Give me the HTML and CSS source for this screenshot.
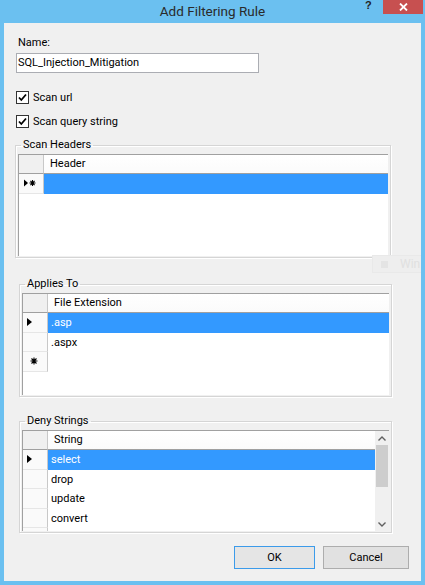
FILE: index.html
```html
<!DOCTYPE html>
<html>
<head>
<meta charset="utf-8">
<link rel="stylesheet" href="styles.css">
</head>
<body>
<div class="window">
  <div class="titlebar">
    <div class="tb-spacer"></div>
    <div class="title">Add Filtering Rule</div>
    <div class="help">?</div>
    <div class="close"><svg width="9" height="8" viewBox="0 0 9 8"><path d="M1 0.5 L8 7.5 M8 0.5 L1 7.5" stroke="#fff" stroke-width="1.8"/></svg></div>
  </div>
  <div class="client">
    <div class="name-label">Name:</div>
    <div class="textbox">SQL_Injection_Mitigation</div>
    <div class="check c1"><span class="box"><svg width="11" height="11" viewBox="0 0 11 11"><path d="M2 5.5 L4.3 8 L9 2.5" fill="none" stroke="#000" stroke-width="1.8"/></svg></span><span class="check-text">Scan url</span></div>
    <div class="check c2"><span class="box"><svg width="11" height="11" viewBox="0 0 11 11"><path d="M2 5.5 L4.3 8 L9 2.5" fill="none" stroke="#000" stroke-width="1.8"/></svg></span><span class="check-text">Scan query string</span></div>

    <fieldset class="group g-headers">
      <legend>Scan Headers</legend>
      <div class="grid">
        <div class="gtable">
          <div class="row head"><div class="rh"></div><div class="cell">Header</div></div>
          <div class="row sel"><div class="rh rh-both">
            <svg width="12" height="8" viewBox="0 0 12 8"><path d="M0 0.5 L4 4 L0 7.5 Z" fill="#000"/><g stroke="#000" stroke-width="1.1"><path d="M8.5 1 V7 M5.5 4 H11.5 M6.4 1.9 L10.6 6.1 M10.6 1.9 L6.4 6.1"/></g></svg>
          </div><div class="cell"></div></div>
        </div>
      </div>
    </fieldset>

    <fieldset class="group g-applies">
      <legend>Applies To</legend>
      <div class="grid">
        <div class="gtable">
          <div class="row head"><div class="rh"></div><div class="cell">File Extension</div></div>
          <div class="row sel"><div class="rh"><svg class="arrow" width="5" height="8" viewBox="0 0 5 8"><path d="M0 0 L5 4 L0 8 Z" fill="#000"/></svg></div><div class="cell">.asp</div></div>
          <div class="row"><div class="rh"></div><div class="cell">.aspx</div></div>
          <div class="row"><div class="rh"><svg class="star" width="8" height="8" viewBox="0 0 8 8"><g stroke="#000" stroke-width="1.1"><path d="M4 0.5 V7.5 M0.5 4 H7.5 M1.5 1.5 L6.5 6.5 M6.5 1.5 L1.5 6.5"/></g></svg></div><div class="cell"></div></div>
        </div>
      </div>
    </fieldset>

    <fieldset class="group g-deny">
      <legend>Deny Strings</legend>
      <div class="grid grid-scroll">
        <div class="gtable">
          <div class="row head"><div class="rh"></div><div class="cell">String</div></div>
          <div class="row sel"><div class="rh"><svg class="arrow" width="5" height="8" viewBox="0 0 5 8"><path d="M0 0 L5 4 L0 8 Z" fill="#000"/></svg></div><div class="cell">select</div></div>
          <div class="row"><div class="rh"></div><div class="cell">drop</div></div>
          <div class="row"><div class="rh"></div><div class="cell">update</div></div>
          <div class="row"><div class="rh"></div><div class="cell">convert</div></div>
          <div class="row"><div class="rh"></div><div class="cell"></div></div>
        </div>
        <div class="scrollbar">
          <div class="sb-btn"><svg width="8" height="5" viewBox="0 0 8 5"><path d="M0.5 4.5 L4 1 L7.5 4.5" fill="none" stroke="#606060" stroke-width="1.4"/></svg></div>
          <div class="sb-track"><div class="sb-thumb"></div></div>
          <div class="sb-btn"><svg width="8" height="5" viewBox="0 0 8 5"><path d="M0.5 0.5 L4 4 L7.5 0.5" fill="none" stroke="#606060" stroke-width="1.4"/></svg></div>
        </div>
      </div>
    </fieldset>

    <div class="buttons">
      <div class="btn btn-default">OK</div>
      <div class="btn">Cancel</div>
    </div>

    <div class="watermark"><span class="wm-icon"></span><span class="wm-text">Win</span></div>
  </div>
</div>
</body>
</html>
```

FILE: styles.css
```css
* { box-sizing: border-box; }

body {
  margin: 0;
  font-family: Roboto, "Open Sans", sans-serif;
  font-size: 11px;
  color: #000;
}

.window {
  width: 425px;
  height: 585px;
  background: #6bc0f0;
  display: flex;
  flex-direction: column;
  overflow: hidden;
}

.titlebar {
  height: 23px;
  flex: none;
  display: flex;
  align-items: flex-start;
}

.tb-spacer { width: 60px; flex: none; }

.title {
  flex: 1;
  text-align: center;
  font-size: 13.5px;
  line-height: 22px;
  color: #2a2a2a;
}

.help {
  width: 18px;
  flex: none;
  font-family: "Liberation Sans", sans-serif;
  font-weight: bold;
  font-size: 11px;
  line-height: 11px;
  color: #222;
}

.close {
  width: 40px;
  height: 14px;
  flex: none;
  margin-right: 2px;
  background: #c75050;
  display: flex;
  align-items: center;
  justify-content: center;
}

.client {
  position: relative;
  flex: 1;
  margin: 0 4px 4px 4px;
  background: #f0f0f0;
  overflow: hidden;
  display: flex;
  flex-direction: column;
  align-items: flex-start;
}

.name-label {
  margin: 12px 0 0 14px;
  line-height: 16px;
}

.textbox {
  margin: 2px 0 0 12px;
  width: 243px;
  height: 20px;
  background: #fff;
  border: 1px solid #abadb3;
  padding: 0 1px;
  line-height: 18px;
}

.check {
  display: flex;
  align-items: center;
  height: 13px;
  margin-left: 12px;
}
.c1 { margin-top: 18px; }
.c2 { margin-top: 11px; }

.box {
  width: 13px;
  height: 13px;
  border: 1px solid #333;
  background: #fff;
  display: flex;
  align-items: center;
  justify-content: center;
}

.check-text {
  margin-left: 4px;
  line-height: 13px;
}

.group {
  margin: 0;
  border: 1px solid #d5d5d5;
  box-shadow: inset 1px 1px 0 #fff, 1px 1px 0 #fff;
  padding: 1px 2px 1px 2px;
  min-width: 0;
}

.group legend {
  margin-left: 3px;
  padding: 0 2px;
  line-height: 16px;
}

.g-headers { margin: 9px 0 0 11px; width: 376px; }
.g-applies { margin: 18px 0 0 15px; width: 373px; }
.g-deny    { margin: 16px 0 0 15px; width: 373px; }

.grid {
  background: #fff;
  border-top: 1px solid #a0a0a0;
  border-left: 1px solid #a0a0a0;
  height: 102px;
  display: flex;
  overflow: hidden;
}
.g-deny .grid { height: 101px; }

.gtable { flex: 1; min-width: 0; }

.row {
  display: flex;
  height: 19.5px;
}
.row.head { height: 19px; }

.rh {
  width: 25px;
  flex: none;
  background: #fafafa;
  border-right: 1px solid #c8c8c8;
  border-bottom: 1px solid #e6e6e6;
  display: flex;
  align-items: center;
}
.head .rh {
  background: #f0f0f0;
  border-bottom: 1px solid #a0a0a0;
}

.cell {
  flex: 1;
  padding-left: 3px;
  line-height: 19px;
  white-space: nowrap;
}
.head .cell {
  background: linear-gradient(#ffffff, #fbfbfb);
  border-bottom: 1px solid #a0a0a0;
  padding-left: 6px;
  line-height: 18px;
}

.sel .cell {
  background: #3399ff;
  color: #fff;
}

.arrow { margin-left: 4px; }
.star { margin-left: 7px; }
.rh-both svg { margin-left: 5px; }

.scrollbar {
  width: 14px;
  flex: none;
  background: #f0f0f0;
  display: flex;
  flex-direction: column;
}
.sb-btn {
  height: 14px;
  display: flex;
  align-items: center;
  justify-content: center;
  flex: none;
}
.sb-track { flex: 1; padding: 0 1px; }
.sb-thumb {
  height: 42px;
  background: #cdcdcd;
}

.buttons {
  align-self: stretch;
  display: flex;
  justify-content: flex-end;
  gap: 8px;
  margin: 13px 12px 0 0;
}

.btn {
  width: 86px;
  height: 23px;
  background: #e1e1e1;
  border: 1px solid #adadad;
  text-align: center;
  line-height: 21px;
}
.btn-default {
  width: 81px;
  border-color: #3c9bea;
  background: #e5e5e5;
}

.watermark {
  position: absolute;
  left: 368px;
  top: 232px;
  width: 70px;
  height: 18px;
  background: #eeeeee;
  border: 1px solid #e9e9e9;
  display: flex;
  align-items: center;
  gap: 12px;
  padding-left: 8px;
}
.wm-icon {
  width: 7px;
  height: 7px;
  background: #e4e4e4;
}
.wm-text {
  color: #e0e0e0;
  font-size: 12px;
}
```
